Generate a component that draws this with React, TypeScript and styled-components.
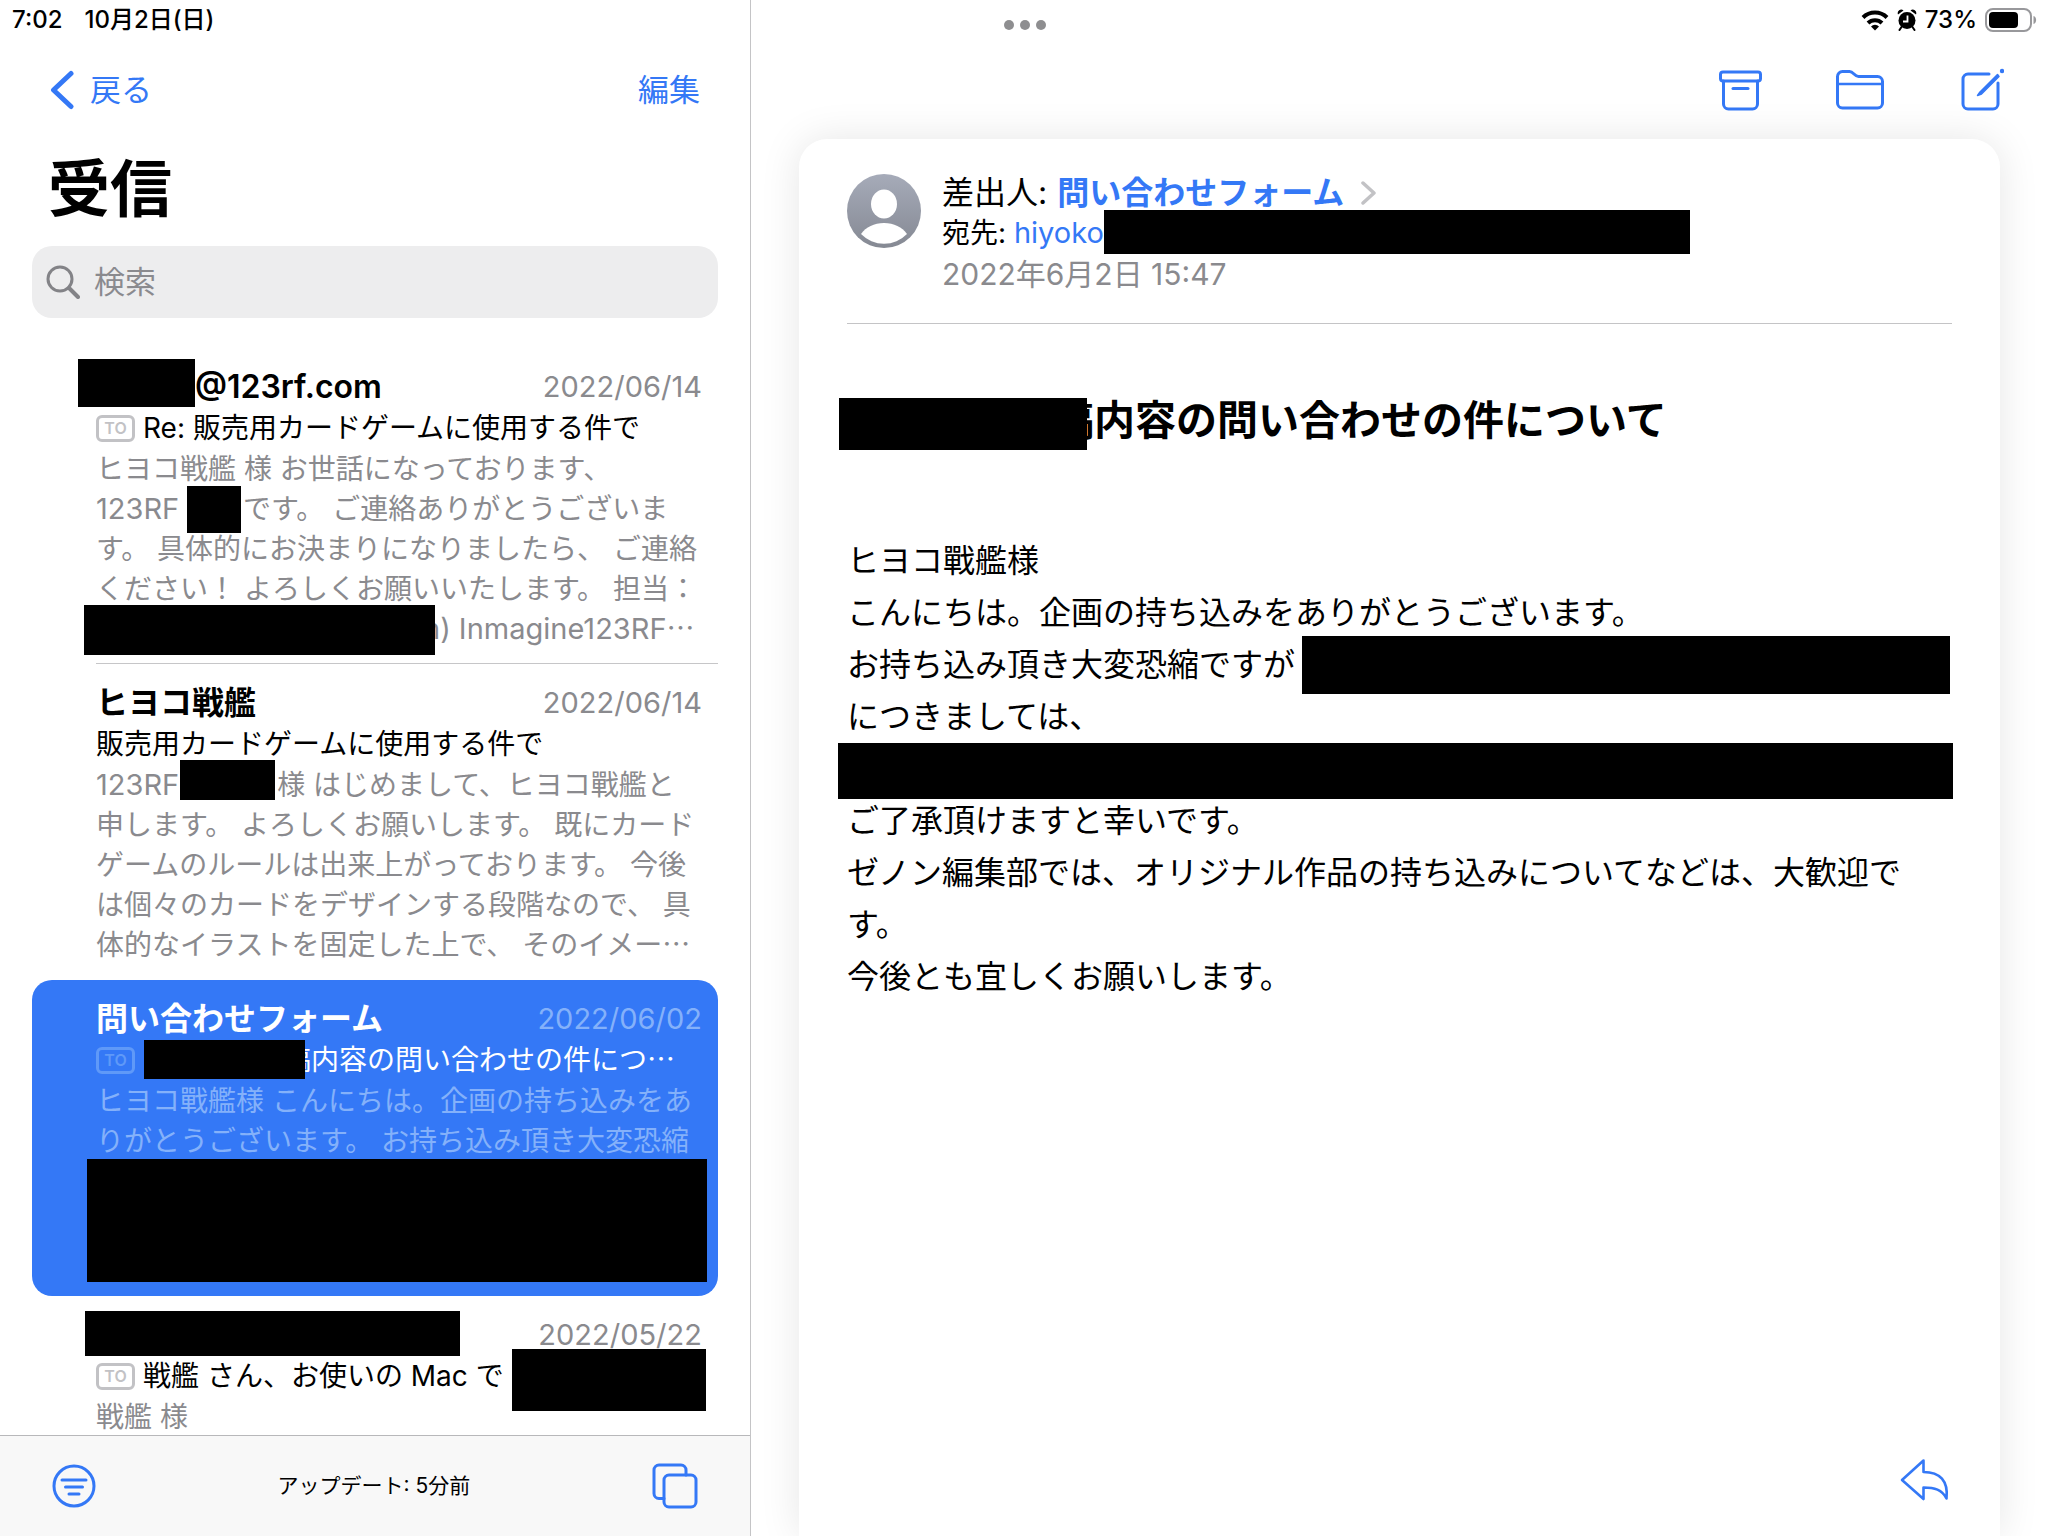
import React from "react";
import styled, { createGlobalStyle } from "styled-components";

const blue = "#3478f6";
const gray = "#8a8a8e";
const cjk = '"Noto Sans CJK JP", sans-serif';

const GlobalStyle = createGlobalStyle`
  * { box-sizing: border-box; }
  body {
    margin: 0;
    background: #fff;
    color: #000;
    font-family: Inter, ${cjk};
  }
  button {
    border: 0;
    padding: 0;
    background: none;
    color: inherit;
    font: inherit;
    text-align: left;
    cursor: pointer;
  }
  h1, h2, p, ul { margin: 0; padding: 0; }
  ul { list-style: none; }
  a { color: ${blue}; text-decoration: none; }
  svg { display: block; flex: none; }
`;

const Screen = styled.div`
  position: relative;
  display: grid;
  grid-template-columns: 11fr 19fr;
  height: 100vh;
  overflow: hidden;
`;

/* Status bar floats over both panes */
const StatusBar = styled.header`
  position: absolute;
  inset: 0 0 auto 0;
  display: grid;
  grid-template-columns: 1fr auto 1fr;
  align-items: center;
  height: 40px;
  padding: 0 11px 0 12px;
  font-size: 24px;
  font-weight: 500;
  line-height: 40px;
`;

const Clock = styled.div`
  display: flex;
  gap: 22px;
`;

const Multitask = styled.button`
  display: flex;
  gap: 6px;
  padding-top: 10px;
  span {
    width: 10px;
    height: 10px;
    border-radius: 50%;
    background: #8e8e90;
  }
`;

const Indicators = styled.div`
  display: flex;
  justify-content: flex-end;
  align-items: center;
  gap: 8px;
`;

/* Mailbox pane */
const Mailbox = styled.section`
  display: flex;
  flex-direction: column;
  min-width: 0;
  min-height: 0;
  padding-top: 40px;
  border-right: 1px solid #c4c4c6;
`;

const NavBar = styled.nav`
  display: flex;
  flex: none;
  justify-content: space-between;
  align-items: center;
  height: 100px;
  padding: 0 50px 0 48px;
  color: ${blue};
  font-size: 31px;
  line-height: 44px;
`;

const BackButton = styled.button`
  display: flex;
  align-items: center;
  gap: 14px;
`;

const MailboxTitle = styled.h1`
  flex: none;
  padding: 0 48px;
  font-size: 62px;
  font-weight: 700;
  line-height: 100px;
`;

const SearchField = styled.label`
  display: flex;
  flex: none;
  align-items: center;
  gap: 12px;
  height: 72px;
  margin: 6px 32px 30px;
  padding: 0 14px;
  border-radius: 20px;
  background: #ededee;
  color: #838387;
`;

const SearchInput = styled.input`
  flex: 1;
  min-width: 0;
  border: 0;
  outline: 0;
  background: none;
  font: 31px/44px Inter, ${cjk};
  &::placeholder { color: #8a8a8e; opacity: 1; }
`;

const MessageList = styled.ul`
  flex: 1;
  min-height: 0;
  padding: 0 32px;
  overflow: hidden;
`;

const MessageCard = styled.button<{ $selected?: boolean; $divider?: boolean }>`
  position: relative;
  display: flex;
  flex-direction: column;
  justify-content: flex-start;
  align-items: stretch;
  width: 100%;
  height: 316px;
  padding: 19px 16px 15px 64px;
  border-radius: ${(p) => (p.$selected ? "20px" : "0")};
  background: ${(p) => (p.$selected ? blue : "transparent")};
  color: ${(p) => (p.$selected ? "#fff" : "#000")};
  --muted: ${(p) => (p.$selected ? "#84b1fa" : gray)};
  --badge: ${(p) => (p.$selected ? "#5f99f8" : "#c2c2c5")};
  font-size: 28px;
  white-space: nowrap;
  &::after {
    content: "";
    display: ${(p) => (p.$divider ? "block" : "none")};
    position: absolute;
    inset: auto 0 0 64px;
    height: 1px;
    background: #c6c6c8;
  }
`;

const MessageTop = styled.span`
  display: flex;
  justify-content: space-between;
  height: 40px;
  line-height: 40px;
`;

const Sender = styled.span`
  font-size: 32px;
  font-weight: 600;
`;

const MessageDate = styled.span`
  margin-left: auto;
  color: var(--muted);
  font-size: 29px;
`;

const MessageSubject = styled.span`
  display: flex;
  align-items: center;
  height: 42px;
  line-height: 42px;
`;

const ToBadge = styled.span`
  width: 39px;
  height: 27px;
  margin-right: 8px;
  border: 3px solid var(--badge);
  border-radius: 6px;
  color: var(--badge);
  font-size: 16px;
  font-weight: 600;
  line-height: 21px;
  text-align: center;
`;

const PreviewLine = styled.span`
  display: block;
  height: 40px;
  color: var(--muted);
  line-height: 40px;
`;

const Dots = styled.span`
  font-family: ${cjk};
  line-height: 1;
`;

const Latin = styled.span`
  font-size: 29px;
  line-height: 1;
`;

/* Space kept in a line for words hidden under a redaction */
const Blank = styled.span<{ $w: number }>`
  display: inline-block;
  flex: none;
  width: ${(p) => p.$w}px;
`;

/* Black bar lying over the text */
const Redaction = styled.span<{ $x: number; $y: number; $w: number; $h: number }>`
  position: absolute;
  left: ${(p) => p.$x}px;
  top: ${(p) => p.$y}px;
  width: ${(p) => p.$w}px;
  height: ${(p) => p.$h}px;
  background: #000;
`;

const BottomBar = styled.footer`
  display: flex;
  flex: none;
  justify-content: space-between;
  align-items: center;
  height: 101px;
  padding: 0 52px;
  border-top: 1px solid #b8b8ba;
  background: #f8f8f8;
  color: ${blue};
`;

const Updated = styled.span`
  color: #000;
  font-size: 21px;
  line-height: 28px;
`;

/* Reader pane */
const Reader = styled.main`
  display: flex;
  flex-direction: column;
  min-width: 0;
  padding-top: 40px;
`;

const Toolbar = styled.div`
  display: flex;
  flex: none;
  justify-content: flex-end;
  align-items: center;
  gap: 72px;
  height: 99px;
  padding-right: 44px;
  color: ${blue};
`;

const Letter = styled.article`
  position: relative;
  display: flex;
  flex: 1;
  flex-direction: column;
  margin: 0 48px;
  padding: 33px 48px;
  border-radius: 28px 28px 0 0;
  background: #fff;
  box-shadow: 0 0 40px rgba(0, 0, 0, 0.1);
`;

const Envelope = styled.div`
  display: flex;
  gap: 21px;
  height: 152px;
  border-bottom: 1px solid #c4c4c6;
  > svg { margin-top: 2px; }
`;

const EnvelopeLines = styled.div`
  font-size: 29px;
  line-height: 41px;
`;

const FromLine = styled.p`
  display: flex;
  align-items: center;
  gap: 10px;
  font-size: 32px;
  a { font-weight: 600; }
  svg { margin-left: 6px; }
`;

const ToLine = styled.p`
  font-size: 28px;
`;

const SentDate = styled.p`
  color: ${gray};
  font-size: 30px;
`;

const Subject = styled.h2`
  padding: 64px 0 83px;
  font-size: 41px;
  font-weight: 700;
  line-height: 64px;
  white-space: nowrap;
`;

const Body = styled.div`
  font-size: 32px;
  line-height: 52px;
`;

const ReplyButton = styled.button`
  margin: auto 0 0 auto;
  color: ${blue};
`;

type Box = [number, number, number, number];

type Message = {
  sender: React.ReactNode;
  date: string;
  to?: boolean;
  selected?: boolean;
  divider?: boolean;
  subject: React.ReactNode;
  preview: React.ReactNode[];
  redactions: Box[];
};

const messages: Message[] = [
  {
    sender: <><Blank $w={99} />@123rf.com</>,
    date: "2022/06/14",
    to: true,
    divider: true,
    subject: "Re: 販売用カードゲームに使用する件で",
    preview: [
      "ヒヨコ戦艦 様 お世話になっております、",
      <><Latin>123RF</Latin> <Blank $w={56} />です。 ご連絡ありがとうございま</>,
      "す。 具体的にお決まりになりましたら、 ご連絡",
      "ください！ よろしくお願いいたします。 担当：",
      <><Blank $w={327} /><Latin>n) Inmagine123RF</Latin><Dots>⋯</Dots></>,
    ],
    redactions: [[46, 11, 117, 48], [155, 138, 54, 47], [52, 257, 351, 50]],
  },
  {
    sender: "ヒヨコ戦艦",
    date: "2022/06/14",
    subject: "販売用カードゲームに使用する件で",
    preview: [
      <><Latin>123RF</Latin><Blank $w={98} />様 はじめまして、ヒヨコ戰艦と</>,
      "申します。 よろしくお願いします。 既にカード",
      "ゲームのルールは出来上がっております。 今後",
      "は個々のカードをデザインする段階なので、 具",
      <>体的なイラストを固定した上で、 そのイメー<Dots>⋯</Dots></>,
    ],
    redactions: [[148, 96, 95, 40]],
  },
  {
    sender: "問い合わせフォーム",
    date: "2022/06/02",
    to: true,
    selected: true,
    subject: <><Blank $w={140} />稿内容の問い合わせの件につ<Dots>⋯</Dots></>,
    preview: [
      "ヒヨコ戰艦様 こんにちは。企画の持ち込みをあ",
      "りがとうございます。 お持ち込み頂き大変恐縮",
    ],
    redactions: [[112, 60, 161, 39], [55, 179, 620, 123]],
  },
  {
    sender: "",
    date: "2022/05/22",
    to: true,
    subject: "戦艦 さん、お使いの Mac で",
    preview: ["戦艦 様"],
    redactions: [[53, 15, 375, 45], [480, 53, 194, 62]],
  },
];

const line = { fill: "none", stroke: "currentColor", strokeLinecap: "round", strokeLinejoin: "round" } as const;

const WifiIcon = () => (
  <svg width="28" height="22" viewBox="0 0 28 22" {...line} strokeLinecap="butt" strokeWidth="4">
    <path d="M2 8.500a17 17 0 0 1 24 0" />
    <path d="M7 14a10 10 0 0 1 14 0" />
    <path d="M14 21.500l-4-4a5.600 5.600 0 0 1 8 0z" fill="currentColor" stroke="none" />
  </svg>
);

const AlarmIcon = () => (
  <svg width="20" height="22" viewBox="0 0 20 22">
    <circle cx="10" cy="11.500" r="8.500" />
    <path d="M1 5.500a3.500 3.500 0 0 1 5.500-4zM19 5.500a3.500 3.500 0 0 0-5.500-4z" />
    <path d="M4.500 18l-2 3M15.500 18l2 3" stroke="#000" strokeWidth="2" strokeLinecap="round" />
    <path d="M10.500 6.500v6H6" fill="none" stroke="#fff" strokeWidth="1.800" />
  </svg>
);

const BatteryIcon = () => (
  <svg width="52" height="24" viewBox="0 0 52 24">
    <rect x="1" y="1" width="45" height="22" rx="7" fill="none" stroke="#98989b" strokeWidth="2" />
    <rect x="4" y="4" width="29" height="16" rx="4" />
    <path d="M48.500 8c3.500 1 3.500 7 0 8z" fill="#98989b" />
  </svg>
);

const BackIcon = () => (
  <svg width="28" height="40" viewBox="0 0 28 40" {...line} strokeWidth="5">
    <path d="M23 3.500L5.500 20 23 36.500" />
  </svg>
);

const SearchIcon = () => (
  <svg width="34" height="34" viewBox="0 0 34 34" {...line} strokeWidth="3">
    <circle cx="14" cy="14" r="12" />
    <path d="M23 23l9 9" strokeWidth="4" />
  </svg>
);

const FilterIcon = () => (
  <svg width="44" height="44" viewBox="0 0 44 44" {...line} strokeWidth="3">
    <circle cx="22" cy="22" r="20" />
    <path d="M10 16h24M13.500 23h17M17 30h10" />
  </svg>
);

const WindowsIcon = () => (
  <svg width="46" height="46" viewBox="0 0 46 46" {...line} strokeWidth="3">
    <path d="M12 35.500H7a5 5 0 0 1-5-5V7a5 5 0 0 1 5-5h22a5 5 0 0 1 5 5v5" />
    <rect x="12" y="12" width="32" height="32" rx="5" />
  </svg>
);

const ArchiveIcon = () => (
  <svg width="48" height="44" viewBox="0 0 48 44" {...line} strokeWidth="3">
    <rect x="4.500" y="4" width="40" height="9" rx="2.500" />
    <path d="M7.500 13v23a5 5 0 0 0 5 5h24a5 5 0 0 0 5-5V13" />
    <path d="M17 20.500h15" />
  </svg>
);

const FolderIcon = () => (
  <svg width="48" height="44" viewBox="0 0 48 44" {...line} strokeWidth="3">
    <path d="M1.500 35V8.500a5 5 0 0 1 5-5h7c4 0 5 5 9 5h19a5 5 0 0 1 5 5V35a5 5 0 0 1-5 5h-35a5 5 0 0 1-5-5z" />
    <path d="M1.500 16h45" strokeWidth="2.500" />
  </svg>
);

const ComposeIcon = () => (
  <svg width="48" height="44" viewBox="0 0 48 44" {...line} strokeWidth="3">
    <path d="M33 6H12a5 5 0 0 0-5 5v25a5 5 0 0 0 5 5h25a5 5 0 0 0 5-5V15" />
    <path d="M41.500 6.500L24 24l-2.500 3.500 4-1.500L43 8.500z" strokeWidth="1.500" fill="currentColor" />
    <circle cx="46" cy="3" r="2.200" fill="currentColor" stroke="none" />
  </svg>
);

const ReplyIcon = () => (
  <svg width="56" height="44" viewBox="0 0 56 44" {...line} strokeWidth="2.600">
    <path d="M27.500 1.500L6 21l21.500 19V28.500c11 0 18.500 2 23 11C52.500 22 44 13 27.500 13z" />
  </svg>
);

const ChevronIcon = () => (
  <svg width="16" height="26" viewBox="0 0 16 26" {...line} stroke="#c2c2c5" strokeWidth="3.500">
    <path d="M3 3l11 10L3 23" />
  </svg>
);

const Avatar = () => (
  <svg width="74" height="74" viewBox="0 0 74 74">
    <defs>
      <linearGradient id="avatarFill" x1="0" y1="0" x2="0" y2="1">
        <stop offset="0" stopColor="#a6abb9" />
        <stop offset="1" stopColor="#858993" />
      </linearGradient>
    </defs>
    <circle cx="37" cy="37" r="37" fill="url(#avatarFill)" />
    <ellipse cx="37" cy="30" rx="13" ry="14.500" fill="#fff" />
    <path d="M14 60c5-7 13-11 23-11s18 4 23 11a32 32 0 0 1-46 0z" fill="#fff" />
  </svg>
);

export default function App() {
  return (
    <>
      <GlobalStyle />
      <Screen lang="ja">
        <Mailbox>
          <NavBar>
            <BackButton><BackIcon />戻る</BackButton>
            <button>編集</button>
          </NavBar>
          <MailboxTitle>受信</MailboxTitle>
          <SearchField>
            <SearchIcon />
            <SearchInput type="text" placeholder="検索" aria-label="検索" />
          </SearchField>
          <MessageList>
            {messages.map((m, i) => (
              <li key={i}>
                <MessageCard $selected={m.selected} $divider={m.divider}>
                  <MessageTop>
                    <Sender>{m.sender}</Sender>
                    <MessageDate>{m.date}</MessageDate>
                  </MessageTop>
                  <MessageSubject>
                    {m.to && <ToBadge>TO</ToBadge>}
                    <span>{m.subject}</span>
                  </MessageSubject>
                  {m.preview.map((text, j) => <PreviewLine key={j}>{text}</PreviewLine>)}
                  {m.redactions.map(([x, y, w, h], j) => (
                    <Redaction key={j} $x={x} $y={y} $w={w} $h={h} />
                  ))}
                </MessageCard>
              </li>
            ))}
          </MessageList>
          <BottomBar>
            <button aria-label="フィルタ"><FilterIcon /></button>
            <Updated>アップデート: 5分前</Updated>
            <button aria-label="ウインドウ"><WindowsIcon /></button>
          </BottomBar>
        </Mailbox>

        <Reader>
          <Toolbar>
            <button aria-label="アーカイブ"><ArchiveIcon /></button>
            <button aria-label="フォルダ"><FolderIcon /></button>
            <button aria-label="新規メッセージ"><ComposeIcon /></button>
          </Toolbar>
          <Letter>
            <Envelope>
              <Avatar />
              <EnvelopeLines>
                <FromLine>差出人: <a href="#from">問い合わせフォーム</a><ChevronIcon /></FromLine>
                <ToLine>宛先: <a href="#to"><Latin>hiyoko</Latin></a></ToLine>
                <SentDate>2022年6月2日 15:47</SentDate>
              </EnvelopeLines>
            </Envelope>
            <Subject><Blank $w={206} />稿内容の問い合わせの件について</Subject>
            <Body>
              <p>ヒヨコ戰艦様</p>
              <p>こんにちは。企画の持ち込みをありがとうございます。</p>
              <p>お持ち込み頂き大変恐縮ですが<br />につきましては、</p>
              <p>&nbsp;</p>
              <p>ご了承頂けますと幸いです。</p>
              <p>ゼノン編集部では、オリジナル作品の持ち込みについてなどは、大歓迎です。</p>
              <p>今後とも宜しくお願いします。</p>
            </Body>
            <ReplyButton aria-label="返信"><ReplyIcon /></ReplyButton>
            <Redaction $x={305} $y={71} $w={586} $h={44} />
            <Redaction $x={40} $y={259} $w={248} $h={52} />
            <Redaction $x={503} $y={497} $w={648} $h={58} />
            <Redaction $x={39} $y={604} $w={1115} $h={56} />
          </Letter>
        </Reader>

        <StatusBar lang="ja">
          <Clock><span>7:02</span><span>10月2日(日)</span></Clock>
          <Multitask aria-label="マルチタスク"><span /><span /><span /></Multitask>
          <Indicators>
            <WifiIcon /><AlarmIcon /><span>73%</span><BatteryIcon />
          </Indicators>
        </StatusBar>
      </Screen>
    </>
  );
}
